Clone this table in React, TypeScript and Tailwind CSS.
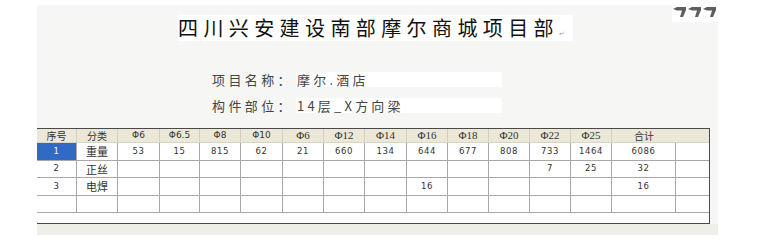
const COLS = [40, 41, 42, 40, 41, 42, 41, 41, 42, 41, 41, 41, 41, 41, 64];

const HEADERS = ['序号', '分类', 'Φ6', 'Φ6.5', 'Φ8', 'Φ10', 'Φ6', 'Φ12', 'Φ14', 'Φ16', 'Φ18', 'Φ20', 'Φ22', 'Φ25', '合计'];

const ROWS = [
  ['1', '重量', '53', '15', '815', '62', '21', '660', '134', '644', '677', '808', '733', '1464', '6086'],
  ['2', '正丝', '', '', '', '', '', '', '', '', '', '', '7', '25', '32'],
  ['3', '电焊', '', '', '', '', '', '', '', '16', '', '', '', '', '16'],
  ['', '', '', '', '', '', '', '', '', '', '', '', '', '', ''],
];

const cjk = { fontFamily: '"Noto Sans CJK SC", sans-serif' };
const num = { fontFamily: '"DejaVu Sans", "Noto Sans CJK SC", sans-serif' };
const serif = { fontFamily: '"Liberation Serif", "Noto Sans CJK SC", serif' };

function Field({ label, value }: { label: string; value: string }) {
  return (
    <div className="flex items-center h-[15px] ml-[175px]">
      <span className="w-[84px] text-[13px] leading-[15px] tracking-[3.4px] text-[#444] whitespace-nowrap" style={cjk}>
        {label}
      </span>
      <div className="w-[206px] h-[15px] bg-white pl-[1px] text-[13px] leading-[15px] tracking-[3.2px] text-[#444] whitespace-nowrap" style={cjk}>
        {value}
      </div>
    </div>
  );
}

export default function App() {
  return (
    <div className="w-[780px] h-[245px] bg-white pt-[5px] pl-[37px]">
      <div className="w-[681px] h-[230px] bg-[#f6f6f5] flex flex-col">
        {/* Title */}
        <div className="flex items-start h-[36px]">
          <div className="ml-[141px] mt-[10px] w-[395px] h-[26px] bg-white flex items-center">
            <span className="text-[20px] leading-[26px] tracking-[5.4px] text-[#111] font-normal whitespace-nowrap" style={cjk}>
              四川兴安建设南部摩尔商城项目部
            </span>
            <span className="text-[7px] leading-none text-[#aaa] mt-[10px]">↵</span>
          </div>
          <div className="ml-auto w-[46px] h-[17px] bg-white">
            <svg width="46" height="17" viewBox="0 0 46 17">
              {[1, 16, 31].map((x) => (
                <path key={x} d={`M${x} 4 L${x + 4} 2 L${x + 13} 2 L${x + 13} 5 L${x + 10} 12 L${x + 7} 12 L${x + 9} 5.5 L${x + 4} 5.5 Z`} fill="#5e5e5e" />
              ))}
            </svg>
          </div>
        </div>

        {/* Fields */}
        <div className="mt-[31px]">
          <Field label="项目名称：" value="摩尔.酒店" />
        </div>
        <div className="mt-[11px]">
          <Field label="构件部位：" value="14层_X方向梁" />
        </div>

        {/* Table */}
        <div className="mt-[15px] w-[673px] h-[97px] bg-white border-t border-r border-b border-[#4a4a4a]">
          <div className="flex h-[14px] bg-[#ebe8d8] border-b border-[#d8d4c4]">
            {HEADERS.map((h, i) => (
              <div
                key={i}
                className={`flex items-center justify-center leading-none text-[#333] whitespace-nowrap ${i < HEADERS.length - 1 ? 'border-r border-[#d4d0c0]' : ''}`}
                style={{ width: COLS[i], ...(i >= 6 && i <= 13 ? serif : i >= 2 && i <= 5 ? num : cjk), fontSize: i >= 6 && i <= 13 ? 11 : i >= 2 && i <= 5 ? 9 : 10 }}
              >
                {h}
              </div>
            ))}
          </div>
          {ROWS.map((row, r) => (
            <div key={r} className="flex h-[17.5px] border-b border-[#a8a8a8]">
              {row.map((c, i) => (
                <div
                  key={i}
                  className={`flex items-center justify-center border-r border-[#a8a8a8] whitespace-nowrap ${
                    r === 0 && i === 0 ? 'bg-[#316ac5] text-white' : 'text-[#333]'
                  } ${i === 1 ? 'text-[11px] text-[#111]' : 'text-[8.5px] tracking-[0.6px]'}`}
                  style={{ width: COLS[i], ...(i === 1 ? cjk : num) }}
                >
                  {c}
                </div>
              ))}
            </div>
          ))}
        </div>
        <div className="h-[11px] bg-[#efeee8]" />
      </div>
    </div>
  );
}
